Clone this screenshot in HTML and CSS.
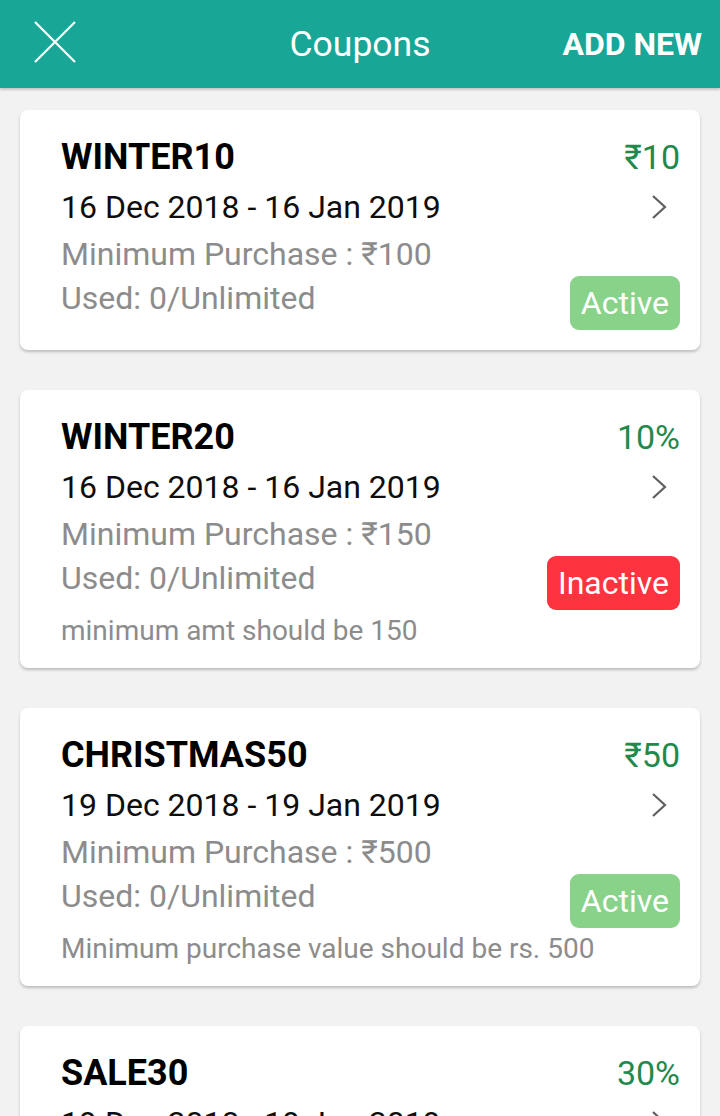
FILE: index.html
```html
<!DOCTYPE html>
<html>
<head>
<meta charset="utf-8">
<link rel="stylesheet" href="styles.css">
</head>
<body>
<header class="topbar">
  <div class="close">
    <svg width="42" height="42" viewBox="0 0 42 42"><path d="M1 1 L41 41 M41 1 L1 41" stroke="#fff" stroke-width="2.2" fill="none"/></svg>
  </div>
  <div class="heading">Coupons</div>
  <div class="add">ADD NEW</div>
</header>
<main class="list">
  <section class="card">
    <div class="code">WINTER10</div>
    <div class="value">₹10</div>
    <div class="dates">16 Dec 2018 - 16 Jan 2019</div>
    <div class="chev"><svg width="16" height="26" viewBox="0 0 16 26"><path d="M2 2 L14 13 L2 24" stroke="#5f5f5f" stroke-width="2.2" fill="none"/></svg></div>
    <div class="meta min">Minimum Purchase : ₹100</div>
    <div class="meta used">Used: 0/Unlimited</div>
    <div class="badge active">Active</div>
  </section>
  <section class="card">
    <div class="code">WINTER20</div>
    <div class="value">10%</div>
    <div class="dates">16 Dec 2018 - 16 Jan 2019</div>
    <div class="chev"><svg width="16" height="26" viewBox="0 0 16 26"><path d="M2 2 L14 13 L2 24" stroke="#5f5f5f" stroke-width="2.2" fill="none"/></svg></div>
    <div class="meta min">Minimum Purchase : ₹150</div>
    <div class="meta used">Used: 0/Unlimited</div>
    <div class="badge inactive">Inactive</div>
    <div class="note">minimum amt should be 150</div>
  </section>
  <section class="card">
    <div class="code">CHRISTMAS50</div>
    <div class="value">₹50</div>
    <div class="dates">19 Dec 2018 - 19 Jan 2019</div>
    <div class="chev"><svg width="16" height="26" viewBox="0 0 16 26"><path d="M2 2 L14 13 L2 24" stroke="#5f5f5f" stroke-width="2.2" fill="none"/></svg></div>
    <div class="meta min">Minimum Purchase : ₹500</div>
    <div class="meta used">Used: 0/Unlimited</div>
    <div class="badge active">Active</div>
    <div class="note">Minimum purchase value should be rs. 500</div>
  </section>
  <section class="card">
    <div class="code">SALE30</div>
    <div class="value">30%</div>
    <div class="dates">19 Dec 2018 - 19 Jan 2019</div>
    <div class="chev"><svg width="16" height="26" viewBox="0 0 16 26"><path d="M2 2 L14 13 L2 24" stroke="#5f5f5f" stroke-width="2.2" fill="none"/></svg></div>
    <div class="meta min">Minimum Purchase : ₹300</div>
    <div class="meta used">Used: 0/Unlimited</div>
    <div class="badge active">Active</div>
  </section>
</main>
</body>
</html>
```
FILE: styles.css
```css
html, body {
  margin: 0;
  padding: 0;
}
body {
  background: #f2f2f2;
  font-family: Roboto, "Liberation Sans", sans-serif;
  width: 720px;
  height: 1116px;
  overflow: hidden;
}
.topbar {
  height: 88px;
  background: #18a696;
  display: grid;
  grid-template-columns: 1fr auto 1fr;
  align-items: center;
  color: #fff;
  box-shadow: 0 2px 2px rgba(0, 0, 0, 0.18);
  position: relative;
  z-index: 1;
}
.close {
  padding-left: 34px;
  height: 42px;
  margin-top: -4px;
}
.close svg { display: block; }
.heading {
  font-size: 35.5px;
  line-height: 44px;
}
.add {
  justify-self: end;
  padding-right: 18px;
  font-size: 32px;
  font-weight: 700;
  line-height: 44px;
}
.list {
  padding: 22px 20px;
  display: flex;
  flex-direction: column;
  gap: 40px;
}
.card {
  background: #fff;
  border-radius: 8px;
  box-shadow: 0 2px 3px rgba(0, 0, 0, 0.22);
  padding: 25px 20px 20px 41px;
  display: grid;
  grid-template-columns: 1fr auto;
  grid-template-areas:
    "code value"
    "dates chev"
    "min min"
    "used badge"
    "note note";
}
.code {
  grid-area: code;
  font-size: 36px;
  font-weight: 700;
  line-height: 44px;
  margin-bottom: 6px;
  color: #000;
}
.value {
  grid-area: value;
  justify-self: end;
  font-size: 34px;
  line-height: 44px;
  color: #1f8a4b;
}
.dates {
  grid-area: dates;
  font-size: 32px;
  line-height: 44px;
  margin-bottom: 3px;
  color: #0d0d0d;
}
.chev {
  grid-area: chev;
  justify-self: end;
  align-self: center;
  margin-right: 13px;
  height: 26px;
  margin-bottom: 3px;
}
.chev svg { display: block; }
.meta {
  font-size: 32px;
  line-height: 44px;
  color: #8c8c8c;
}
.min { grid-area: min; }
.used { grid-area: used; align-self: start; }
.badge {
  grid-area: badge;
  justify-self: end;
  align-self: start;
  height: 54px;
  line-height: 54px;
  padding: 0 11px;
  border-radius: 9px;
  color: #fff;
  font-size: 32px;
}
.active { background: #89d28a; }
.inactive { background: #fd333f; }
.note {
  grid-area: note;
  font-size: 28px;
  line-height: 34px;
  margin-top: 4px;
  color: #8c8c8c;
}
```
